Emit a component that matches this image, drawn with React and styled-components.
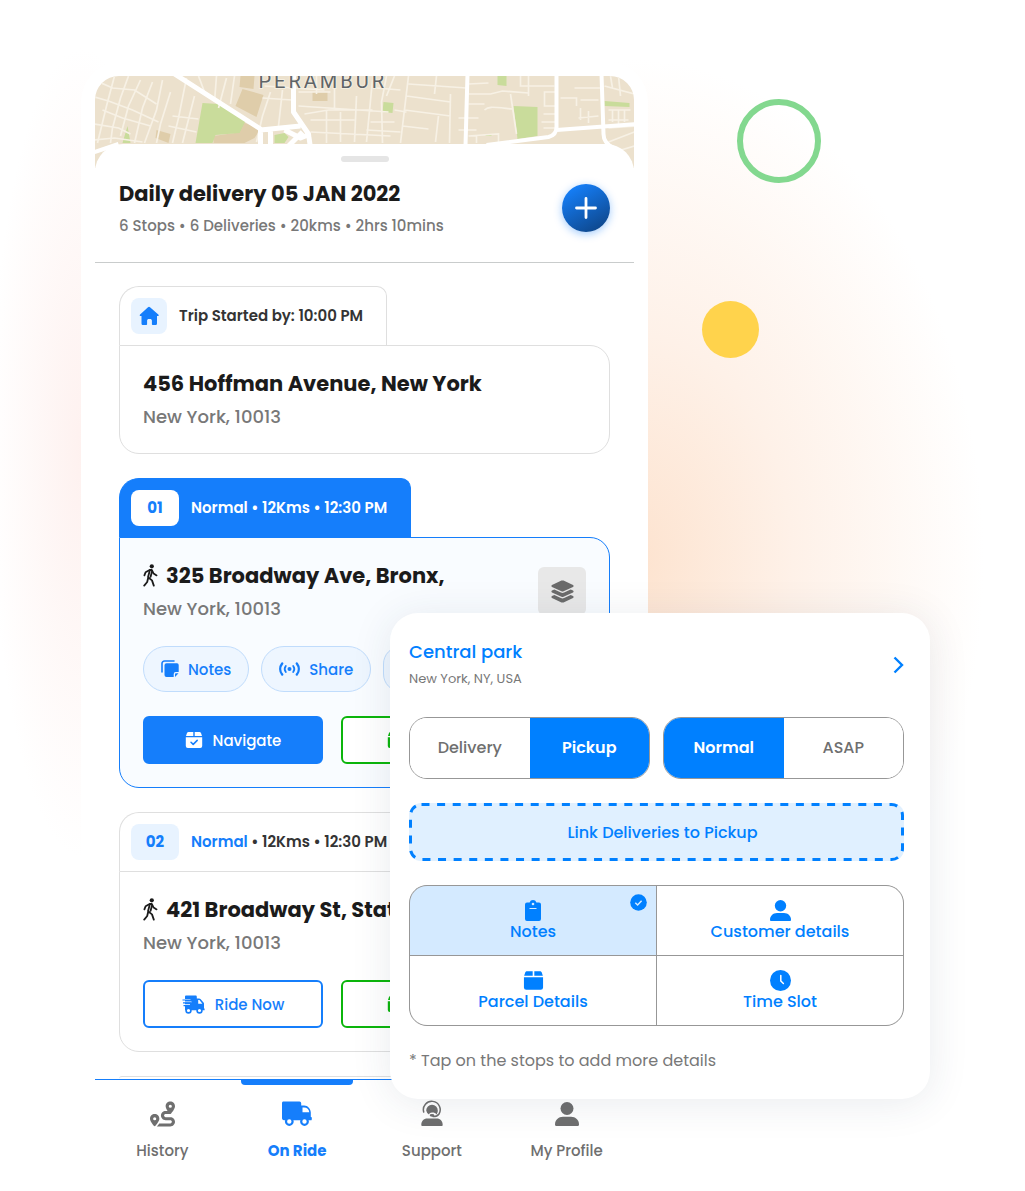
import styled, { createGlobalStyle, css } from "styled-components";
import { FaLayerGroup, FaRoute } from "react-icons/fa6";

const MediaMobile = `@media screen and (max-width: 767px)`;

const blue = "#157efb";
const sky = "#0080ff";
const green = "#0bb50b";
const gray = "#6f6f6f";
const lightGray = "#787878";
const line = "#dfdfdf";

const GlobalStyle = createGlobalStyle`
  * {
    box-sizing: border-box;
  }
  body {
    margin: 0;
    background: #ffffff;
    color: #1b1b1b;
    font-family: Poppins, Inter, "Liberation Sans", sans-serif;
  }
  button {
    font-family: inherit;
    cursor: pointer;
    padding: 0;
    margin: 0;
  }
  h1, h2, p, ul {
    margin: 0;
    padding: 0;
  }
`;

/* 手機和浮動卡片用同一個 grid 疊在一起 */
const Scene = styled.main`
  position: relative;
  overflow: hidden;
  min-height: 100vh;
  display: grid;
  grid-template-columns:
    minmax(0, 81fr) minmax(0, 309fr) minmax(0, 258fr)
    minmax(0, 282fr) minmax(0, 95fr);
  align-items: start;
  background:
    radial-gradient(ellipse 34% 42% at 62% 47%, #fde3cf 0%, #fef1e8 45%, rgba(255, 255, 255, 0) 100%),
    radial-gradient(ellipse 9% 34% at 8% 38%, #fef1ef 0%, rgba(255, 255, 255, 0) 100%),
    #ffffff;
  ${MediaMobile} {
    display: flex;
    flex-direction: column;
    align-items: stretch;
    gap: 24px;
  }
`;

const Ring = styled.span`
  position: absolute;
  left: 71.9%;
  top: 99px;
  width: 84px;
  height: 84px;
  border: 6px solid #83d88f;
  border-radius: 50%;
`;

const Dot = styled.span`
  position: absolute;
  left: 68.5%;
  top: 301px;
  width: 57px;
  height: 57px;
  border-radius: 50%;
  background: #ffd34c;
`;

const Phone = styled.section`
  grid-area: 1 / 2 / 2 / 4;
  margin-top: 62px;
  padding: 14px;
  border-radius: 40px;
  background: #ffffff;
`;

const MapView = styled.svg`
  display: block;
  width: 100%;
  height: 92px;
  border-radius: 24px 24px 0 0;
  background: #ece1cd;
`;

const MapLabel = styled.text`
  font-family: Roboto, sans-serif;
  font-size: 20px;
  letter-spacing: 3px;
  fill: #5f6468;
  stroke: #f4eee0;
  stroke-width: 2px;
  paint-order: stroke;
`;

const Sheet = styled.div`
  position: relative;
  margin-top: -24px;
  padding-top: 12px;
  border-radius: 28px 28px 0 0;
  background: #ffffff;
`;

const Handle = styled.div`
  width: 48px;
  height: 6px;
  margin: 0 auto;
  border-radius: 3px;
  background: #e5e5e5;
`;

const SheetHeader = styled.header`
  display: flex;
  align-items: center;
  justify-content: space-between;
  padding: 16px 24px 24px;
  border-bottom: 1px solid #c9cccc;
`;

const Title = styled.h1`
  font-size: 21px;
  line-height: 32px;
  font-weight: 700;
  white-space: nowrap;
`;

const Summary = styled.p`
  margin-top: 4px;
  font-size: 15px;
  line-height: 24px;
  font-weight: 500;
  color: ${lightGray};
`;

const AddButton = styled.button`
  display: flex;
  align-items: center;
  justify-content: center;
  width: 48px;
  height: 48px;
  border: 0;
  border-radius: 50%;
  background: linear-gradient(150deg, #1580fb 10%, #0e478c 90%);
  box-shadow: 0 2px 8px rgba(21, 126, 251, 0.4);
`;

const StopList = styled.ul`
  display: flex;
  flex-direction: column;
  gap: 24px;
  padding: 23px 24px 0;
  list-style: none;
`;

const Stop = styled.li`
  display: flex;
  flex-direction: column;
  align-items: flex-start;
`;

const StopTab = styled.div`
  display: flex;
  align-items: center;
  gap: 12px;
  height: 59px;
  padding: 0 23px 0 11px;
  border: 1px solid ${(props) => (props.$active ? blue : line)};
  border-bottom: 0;
  border-radius: 20px 10px 0 0;
  background: ${(props) => (props.$active ? blue : "#ffffff")};
  color: ${(props) => (props.$active ? "#ffffff" : "#343434")};
  font-size: 15px;
  line-height: 24px;
  font-weight: 600;
  white-space: nowrap;
`;

const Chip = styled.span`
  display: flex;
  align-items: center;
  justify-content: center;
  width: ${(props) => (props.$square ? "36px" : "48px")};
  height: 36px;
  border-radius: 8px;
  background: ${(props) => (props.$active ? "#ffffff" : "#e8f3ff")};
  color: ${blue};
  font-weight: 700;
`;

const Kind = styled.span`
  color: ${(props) => (props.$active ? "#ffffff" : blue)};
`;

const StopBody = styled.div`
  width: 100%;
  padding: 22px 23px 23px;
  border: 1px solid ${(props) => (props.$active ? blue : line)};
  border-radius: 0 20px 20px 20px;
  background: ${(props) => (props.$active ? "#f9fcff" : "#ffffff")};
`;

const StopTop = styled.div`
  display: flex;
  align-items: center;
  justify-content: space-between;
`;

const Address = styled.h2`
  display: flex;
  align-items: center;
  gap: 8px;
  font-size: 21px;
  line-height: 32px;
  font-weight: 700;
  white-space: nowrap;
`;

const City = styled.p`
  margin-top: 4px;
  font-size: 18px;
  line-height: 26px;
  font-weight: 500;
  color: ${lightGray};
`;

const LayersButton = styled.button`
  display: flex;
  align-items: center;
  justify-content: center;
  width: 48px;
  height: 48px;
  border: 0;
  border-radius: 6px;
  background: #e8e8e8;
  color: #6b6b6b;
`;

const ButtonRow = styled.div`
  display: flex;
  gap: ${(props) => props.$gap};
  margin-top: 24px;
  overflow: hidden;
`;

const Pill = styled.button`
  display: flex;
  flex: none;
  align-items: center;
  gap: 9px;
  height: 46px;
  padding: 0 17px;
  border: 1px solid #c0dcfc;
  border-radius: 23px;
  background: #eef6ff;
  color: ${blue};
  font-size: 15px;
  font-weight: 500;
`;

const Action = styled.button`
  display: flex;
  flex: none;
  align-items: center;
  justify-content: center;
  gap: 10px;
  width: 180px;
  height: 48px;
  border: 2px solid ${(props) => props.$color};
  border-radius: 6px;
  background: ${(props) => (props.$filled ? props.$color : "#ffffff")};
  color: ${(props) => (props.$filled ? "#ffffff" : props.$color)};
  font-size: 15px;
  font-weight: 500;
`;

const DoneAction = styled(Action)`
  justify-content: flex-start;
  padding-left: 44px;
`;

const NextStop = styled.li`
  height: 3px;
  border-top: 1px solid ${line};
  border-radius: 20px 20px 0 0;
`;

const TabBar = styled.nav`
  display: grid;
  grid-template-columns: repeat(4, 1fr);
  border-top: 1px solid ${blue};
`;

const TabLink = styled.a`
  position: relative;
  display: flex;
  flex-direction: column;
  align-items: center;
  gap: 13px;
  padding: 20px 0 12px;
  color: ${(props) => (props.$active ? blue : gray)};
  font-size: 15px;
  line-height: 20px;
  font-weight: ${(props) => (props.$active ? 700 : 500)};
  text-decoration: none;
  svg {
    height: 28px;
  }
  ${(props) =>
    props.$active &&
    css`
      &::before {
        content: "";
        position: absolute;
        top: -1px;
        width: 112px;
        height: 6px;
        border-radius: 0 0 4px 4px;
        background: ${blue};
      }
    `}
`;

const DetailCard = styled.section`
  position: relative;
  grid-area: 1 / 3 / 2 / 5;
  margin-top: 613px;
  padding: 27px 26px 26px 19px;
  border-radius: 28px;
  background: #ffffff;
  box-shadow: 0 4px 40px rgba(40, 60, 90, 0.1);
  ${MediaMobile} {
    margin-top: 0;
  }
`;

const PlaceRow = styled.a`
  display: flex;
  align-items: center;
  justify-content: space-between;
  color: ${sky};
  text-decoration: none;
`;

const PlaceName = styled.h2`
  font-size: 18px;
  line-height: 24px;
  font-weight: 500;
`;

const PlaceCity = styled.p`
  margin-top: 5px;
  font-size: 13px;
  line-height: 20px;
  color: ${lightGray};
`;

const ToggleRow = styled.div`
  display: grid;
  grid-template-columns: 1fr 1fr;
  gap: 13px;
  margin-top: 28px;
`;

const Toggle = styled.div`
  display: grid;
  grid-template-columns: 1fr 1fr;
  height: 62px;
  border: 1px solid #979797;
  border-radius: 18px;
  overflow: hidden;
`;

const ToggleButton = styled.button`
  padding-bottom: 2px;
  border: 0;
  background: ${(props) => (props.$on ? sky : "#ffffff")};
  color: ${(props) => (props.$on ? "#ffffff" : gray)};
  font-size: 16px;
  font-weight: ${(props) => (props.$on ? 600 : 500)};
`;

const LinkButton = styled.button`
  position: relative;
  display: block;
  width: 100%;
  height: 58px;
  margin-top: 24px;
  padding-left: 12px;
  border: 0;
  border-radius: 12px;
  background: #e0f0ff;
  color: ${sky};
  font-size: 16px;
  font-weight: 500;
`;

const Dashes = styled.svg`
  position: absolute;
  inset: 0;
  width: 100%;
  height: 100%;
  rect {
    width: calc(100% - 3px);
    height: calc(100% - 3px);
    fill: none;
    stroke: ${sky};
    stroke-width: 3px;
    stroke-dasharray: 8 7.6;
  }
`;

const DetailGrid = styled.div`
  display: grid;
  grid-template-columns: 1fr 1fr;
  gap: 1px;
  margin-top: 24px;
  border: 1px solid #979797;
  border-radius: 18px;
  background: #979797;
  overflow: hidden;
`;

const DetailButton = styled.button`
  position: relative;
  display: flex;
  flex-direction: column;
  align-items: center;
  justify-content: center;
  gap: 1px;
  height: 69px;
  border: 0;
  background: ${(props) => (props.$on ? "#d4eaff" : "#ffffff")};
  color: ${sky};
  font-size: 16px;
  line-height: 20px;
  font-weight: 500;
`;

const Badge = styled.span`
  position: absolute;
  top: 8px;
  right: 9px;
  height: 17px;
  svg {
    display: block;
  }
`;

const Hint = styled.p`
  margin-top: 23px;
  font-size: 16px;
  line-height: 24px;
  color: ${lightGray};
`;

const HomeIcon = () => (
  <svg width="22" height="20" viewBox="0 0 22 20" fill="currentColor" aria-hidden="true">
    <path d="M10 1.2a1.6 1.6 0 0 1 2 0l8.3 7.2c.8.8.4 1.7-.6 1.7h-.7v7.3c0 1-.8 1.7-1.7 1.7h-2.6c-.5 0-.8-.3-.8-.8v-3.6c0-1-.8-1.7-1.7-1.7h-1.4c-1 0-1.7.7-1.7 1.7v3.600c0 .5-.4.8-.8.8H5.2c-1 0-1.7-.7-1.7-1.7v-7.300h-.8c-1 0-1.400-1-.6-1.700z" />
  </svg>
);

const WalkIcon = () => (
  <svg width="15" height="24" viewBox="0 0 15 24" fill="none" stroke="currentColor" strokeWidth="1.8" strokeLinecap="round" strokeLinejoin="round" aria-hidden="true">
    <circle cx="8.8" cy="2.3" r="2.1" fill="currentColor" stroke="none" />
    <path d="M1.4 11.4l1.2-3.2L6.6 6h2.200l1.800 3.600 3 1.800" />
    <path d="M6.800 6.400L5 13.200l4 3.200 1.800 5.200M9 7.600l-1.400 5.200M5 14.500L4.200 18l-3 3.600" />
  </svg>
);

const PlusIcon = () => (
  <svg width="22" height="22" viewBox="0 0 22 22" stroke="#ffffff" strokeWidth="2.8" strokeLinecap="round" aria-hidden="true">
    <path d="M11 1.5v19M1.5 11h19" />
  </svg>
);

const NotesIcon = () => (
  <svg width="18" height="18" viewBox="0 0 18 18" aria-hidden="true">
    <path d="M1 12V3.500A2.500 2.500 0 0 1 3.500 1H13" fill="none" stroke="currentColor" strokeWidth="1.6" strokeLinecap="round" />
    <path d="M5.500 3.200H16a1.700 1.700 0 0 1 1.700 1.700V12h-3a2 2 0 0 0-2 2v3H5.500a2 2 0 0 1-2-2V5.200a2 2 0 0 1 2-2z" fill="currentColor" />
    <path d="M14 17v-2.500c0-.7.400-1.200 1.200-1.200h2.300z" fill="currentColor" />
  </svg>
);

const ShareIcon = () => (
  <svg width="21" height="16" viewBox="0 0 21 16" fill="none" stroke="currentColor" strokeLinecap="round" aria-hidden="true">
    <circle cx="10.5" cy="8" r="2" fill="currentColor" stroke="none" />
    <path d="M3.200 2.400a9 9 0 0 0 0 11.200M17.800 2.400a9 9 0 0 1 0 11.200" strokeWidth="2.4" />
    <path d="M6.800 5a5 5 0 0 0 0 6M14.200 5a5 5 0 0 1 0 6" strokeWidth="1.8" />
  </svg>
);

const BoxIcon = ({ check, size = 18 }) => (
  <svg width={size} height={size} viewBox="0 0 18 18" aria-hidden="true">
    <path d="M3.600 1h4.700v4H1l.9-2.800C2.200 1.400 2.800 1 3.600 1zM9.700 1h4.700c.8 0 1.400.4 1.700 1.200L17 5H9.700zM.8 6.300h16.400V15a2 2 0 0 1-2 2H2.800a2 2 0 0 1-2-2z" fill="currentColor" />
    {check && <path d="M6 11.200l2.200 2.200 4-4" fill="none" stroke={blue} strokeWidth="1.5" strokeLinecap="round" strokeLinejoin="round" />}
  </svg>
);

const FastTruckIcon = () => (
  <svg width="23" height="19" viewBox="0 0 23 19" aria-hidden="true">
    <path d="M3 1.500C3 .8 3.500.4 4.200.4h9.300c.8 0 1.300.5 1.300 1.300v1.800h2.300c.6 0 1 .2 1.400.6l3 3.400c.4.400.5.8.5 1.300v4.800h.6v1.600H3z" fill="currentColor" />
    <path d="M16.200 5v3.700h4.200L17.400 5zM0 4h8.500v1H0zM0 6.600h9.500v1H0zM0 9.200h8v1H0z" fill="#ffffff" />
    <path d="M.5 5h10M1 7.800h8.500M1.500 10.600h7" fill="none" stroke="currentColor" strokeWidth="1.2" />
    <circle cx="6.5" cy="15.500" r="2.4" fill="#ffffff" stroke="currentColor" strokeWidth="1.6" />
    <circle cx="17.5" cy="15.500" r="2.4" fill="#ffffff" stroke="currentColor" strokeWidth="1.6" />
  </svg>
);

const TruckIcon = () => (
  <svg width="30" height="25" viewBox="0 0 30 25" aria-hidden="true">
    <path d="M1.500 0h16A1.700 1.700 0 0 1 19.200 1.700V4h3c3.600 0 6.600 3.400 6.600 7v4.500h.7c.4 1.200.5 2.200 0 3.200H2A2 2 0 0 1 0 17V1.500C0 .6.600 0 1.500 0z" fill="currentColor" />
    <path d="M20.500 6v4.800h6.800C26.900 8 25 6 22 6z" fill="#ffffff" />
    <circle cx="7.3" cy="20" r="3.3" fill="#ffffff" stroke="currentColor" strokeWidth="2.2" />
    <circle cx="22.5" cy="20" r="3.3" fill="#ffffff" stroke="currentColor" strokeWidth="2.2" />
  </svg>
);

const PersonIcon = ({ size = 24 }) => (
  <svg width={size} height={size} viewBox="0 0 24 24" fill="currentColor" aria-hidden="true">
    <circle cx="12" cy="6.5" r="6.5" />
    <path d="M0 22.500C0 18 3.500 14.800 8 14.800h8c4.500 0 8 3.200 8 7.700 0 .9-.5 1.500-1.300 1.500H1.300C.5 24 0 23.400 0 22.500z" />
  </svg>
);

const SupportIcon = () => (
  <svg width="22" height="25" viewBox="0 0 22 25" fill="none" aria-hidden="true">
    <path d="M2.700 10.500A8.400 8.400 0 1 1 18 12.500c-1.200 1.800-3.500 2.500-6 2.500" stroke="currentColor" strokeWidth="1.5" strokeLinecap="round" />
    <path d="M11 3.200a5.800 5.800 0 0 1 5.800 6c0 1.500-.6 2.800-1.500 3.700-.4-1.400-2-2-4.300-2-1.600 0-2.700.8-3 2.200a5.800 5.800 0 0 1-2.800-4A5.800 5.800 0 0 1 11 3.200z" fill="currentColor" />
    <ellipse cx="11" cy="13.800" rx="2.3" ry="1.4" fill="currentColor" />
    <path d="M.3 23.300c0-3.600 2.400-6.300 6-6.300h9.400c3.600 0 6 2.700 6 6.300 0 .8-.4 1.200-1 1.200H1.300c-.6 0-1-.4-1-1.200z" fill="currentColor" />
  </svg>
);

const ClipboardIcon = () => (
  <svg width="16" height="21" viewBox="0 0 16 21" aria-hidden="true">
    <path d="M2 2.500h2.600a3.600 3.600 0 0 1 6.800 0H14a2 2 0 0 1 2 2V19a2 2 0 0 1-2 2H2a2 2 0 0 1-2-2V4.500a2 2 0 0 1 2-2z" fill="currentColor" />
    <circle cx="8" cy="4" r="1.3" fill="#d4eaff" />
    <path d="M4.500 8.500h7" stroke="#d4eaff" strokeWidth="1.2" />
  </svg>
);

const ClockIcon = () => (
  <svg width="21" height="21" viewBox="0 0 21 21" fill="none" aria-hidden="true">
    <circle cx="10.5" cy="10.5" r="10.5" fill="currentColor" />
    <path d="M10.800 5.500v5.500l2.600 2.500" stroke="#ffffff" strokeWidth="1.5" strokeLinecap="round" />
  </svg>
);

const CheckIcon = () => (
  <svg width="17" height="17" viewBox="0 0 17 17" fill="none" aria-hidden="true">
    <circle cx="8.5" cy="8.5" r="8.3" fill="currentColor" />
    <path d="M5.300 8.800l2.300 2.200 4-4.300" stroke="#d4eaff" strokeWidth="1.5" />
  </svg>
);

const ChevronIcon = () => (
  <svg width="11" height="18" viewBox="0 0 11 18" fill="none" stroke="currentColor" strokeWidth="2.4" aria-hidden="true">
    <path d="M1.5 1.5L9 9l-7.500 7.500" />
  </svg>
);

const StreetMap = () => (
  <MapView viewBox="0 0 540 92" preserveAspectRatio="xMidYMin slice" role="img" aria-label="Map">
    <g fill="#dfcdaa">
      <path d="M146 0h14l-1 13-14-2zM148 13l21 6-7 22-21-11zM218 16h15v9h-15zM62 54l14 4-2 9-13-5zM119 60l21-3 8-11 18 7-6 9-10 5h-31z" />
    </g>
    <g fill="#c9dc9b">
      <path d="M108 27l16 1 27 17-6 12-24 2-3 8h-17zM33 50l3 17h-8zM180 59l10-2 4 4-4 6h-10zM403 0h9v10l-9-1zM289 26l10 1-1 10-10-1zM419 30l24 1v29l-20 3zM510 25l25 2v4l-25-1zM391 58h6v2h-6z" />
    </g>
    <g fill="none" stroke="#f7f1e5" strokeWidth="1.7">
      <path d="M0 4l18 8 22 2 22 14M0 21l14 4 24 9 26 12M8 34l20 8 28 8M0 48l24 4 12 6M0 64l20-2 28 4" />
      <path d="M20 0l-8 30-9 37M34 0l-8 22-8 30-2 15M46 4l-12 26-8 30M58 6l-10 26-8 35M68 4l-6 30-12 33M76 16l-10 32-4 19" />
      <path d="M78 40l26 3M74 50l28 6M92 2l-8 40-6 25M100 20l-12 47M104 0l6 16M122 0l-2 26M132 2l-8 30M140 0l-4 28" />
      <path d="M170 10l60 4M168 22l30 2M176 16l-8 24-6 26M188 14l-4 36M204 16h32M204 30l90 6M210 38l24-4h44M216 44h44M216 56l80 4M232 34v33M246 36v30M262 20l-2 46M278 4l-6 62M222 0v18M240 0v34" />
      <path d="M292 0l-5 26 1 41M314 0l-8 67M314 8l58 4M312 20l44 6M310 34l46 6M308 50l26 3M342 0l-2 18M356 18l-1 49M344 40l-3 26M300 34l12 2M276 46h24M272 54l34 2M300 0l-8 20M306 14l-24-2" />
      <path d="M374 8l20-1M374 18h22l12-3 26 2M390 34c4-4 8-3 28-1M374 28h16M364 42h20M364 54h18M416 18l6 40M426 0v10h34M434 0v20M462 16h-12v14h12M449 38h14M447 46h14M449 52h12M374 60l30-2v9M382 60v7M466 22h16v8M480 12h26M486 24h18M486 32v12M494 35v12M484 42l20-2" />
      <path d="M510 10l30 8M524 0l2 20M516 0l2 12M514 34h22M514 44h20M518 34v12M524 34v14M530 34v12M514 52l26-2M514 66l26-10M520 76l20-6" />
    </g>
    <g fill="none" stroke="#ffffff" strokeWidth="5" strokeLinejoin="round">
      <path d="M80-2l86 55v20M166 54l40-4M199-2v38l15 22 2 14M176 54v18M190 54l16 8 10-4M194 70l14-14" />
      <path d="M373-2l-2 72M462-2v53c0 6-4 9-8 10l-62 8M462 54l80-6M507-2l2 60c0 8 6 12 10 14M0 76l24-8" strokeWidth="4" />
    </g>
    <MapLabel x="164" y="12">PERAMBUR</MapLabel>
  </MapView>
);

const stops = [
  {
    address: "456 Hoffman Avenue, New York",
    city: "New York, 10013",
    started: "Trip Started by: 10:00 PM",
  },
  {
    id: "01",
    address: "325 Broadway Ave, Bronx,",
    city: "New York, 10013",
    active: true,
  },
  {
    id: "02",
    address: "421 Broadway St, State",
    city: "New York, 10013",
  },
];

const StopCard = ({ stop }) => (
  <Stop>
    <StopTab $active={stop.active}>
      <Chip $active={stop.active} $square={!stop.id}>
        {stop.id || <HomeIcon />}
      </Chip>
      {stop.started || (
        <span>
          <Kind $active={stop.active}>Normal</Kind> • 12Kms • 12:30 PM
        </span>
      )}
    </StopTab>
    <StopBody $active={stop.active}>
      <StopTop>
        <div>
          <Address>
            {stop.id && <WalkIcon />}
            {stop.address}
          </Address>
          <City>{stop.city}</City>
        </div>
        {stop.active && (
          <LayersButton aria-label="Layers">
            <FaLayerGroup size={25} />
          </LayersButton>
        )}
      </StopTop>
      {stop.active && (
        <ButtonRow $gap="12px">
          <Pill>
            <NotesIcon />
            Notes
          </Pill>
          <Pill>
            <ShareIcon />
            Share
          </Pill>
          <Pill aria-label="Call" />
        </ButtonRow>
      )}
      {stop.id && (
        <ButtonRow $gap="18px">
          {stop.active ? (
            <Action $color={blue} $filled>
              <BoxIcon check />
              Navigate
            </Action>
          ) : (
            <Action $color={blue}>
              <FastTruckIcon />
              Ride Now
            </Action>
          )}
          <DoneAction $color={green} aria-label="Complete">
            <BoxIcon />
          </DoneAction>
        </ButtonRow>
      )}
    </StopBody>
  </Stop>
);

const App = () => (
  <>
    <GlobalStyle />
    <Scene>
      <Ring />
      <Dot />
      <Phone>
        <StreetMap />
        <Sheet>
          <Handle />
          <SheetHeader>
            <div>
              <Title>Daily delivery 05 JAN 2022</Title>
              <Summary>6 Stops • 6 Deliveries • 20kms • 2hrs 10mins</Summary>
            </div>
            <AddButton aria-label="Add stop">
              <PlusIcon />
            </AddButton>
          </SheetHeader>
          <StopList>
            {stops.map((stop) => (
              <StopCard key={stop.address} stop={stop} />
            ))}
            <NextStop />
          </StopList>
        </Sheet>
        <TabBar>
          <TabLink href="#history">
            <FaRoute size={25} />
            History
          </TabLink>
          <TabLink href="#ride" $active>
            <TruckIcon />
            On Ride
          </TabLink>
          <TabLink href="#support">
            <SupportIcon />
            Support
          </TabLink>
          <TabLink href="#profile">
            <PersonIcon />
            My Profile
          </TabLink>
        </TabBar>
      </Phone>
      <DetailCard>
        <PlaceRow href="#place">
          <div>
            <PlaceName>Central park</PlaceName>
            <PlaceCity>New York, NY, USA</PlaceCity>
          </div>
          <ChevronIcon />
        </PlaceRow>
        <ToggleRow>
          <Toggle>
            <ToggleButton>Delivery</ToggleButton>
            <ToggleButton $on>Pickup</ToggleButton>
          </Toggle>
          <Toggle>
            <ToggleButton $on>Normal</ToggleButton>
            <ToggleButton>ASAP</ToggleButton>
          </Toggle>
        </ToggleRow>
        <LinkButton>
          <Dashes aria-hidden="true">
            <rect x="1.5" y="1.5" rx="11" />
          </Dashes>
          Link Deliveries to Pickup
        </LinkButton>
        <DetailGrid>
          <DetailButton $on>
            <ClipboardIcon />
            Notes
            <Badge>
              <CheckIcon />
            </Badge>
          </DetailButton>
          <DetailButton>
            <PersonIcon size={21} />
            Customer details
          </DetailButton>
          <DetailButton>
            <BoxIcon size={21} />
            Parcel Details
          </DetailButton>
          <DetailButton>
            <ClockIcon />
            Time Slot
          </DetailButton>
        </DetailGrid>
        <Hint>* Tap on the stops to add more details</Hint>
      </DetailCard>
    </Scene>
  </>
);

export default App;
